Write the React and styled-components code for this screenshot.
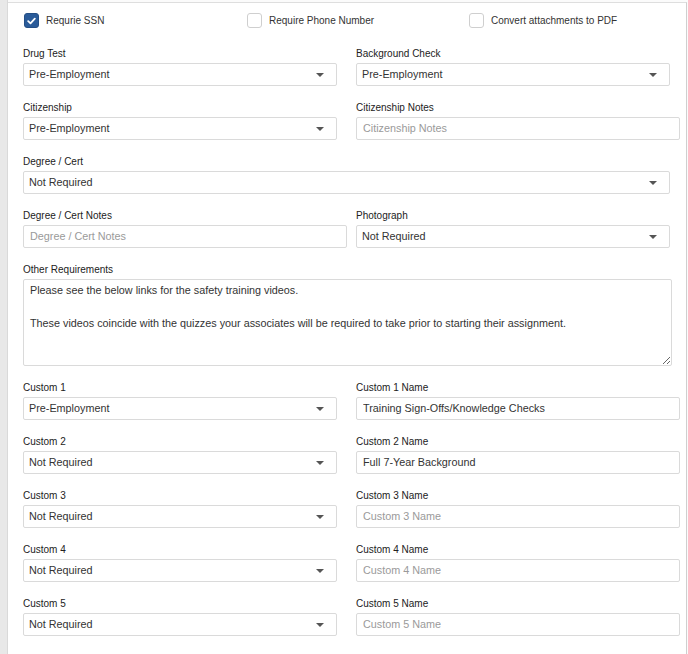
import React from "react";
import styled, { createGlobalStyle } from "styled-components";

const GlobalStyle = createGlobalStyle`
  html, body { margin: 0; padding: 0; background: #ffffff; }
  body { font-family: "Liberation Sans", Arial, sans-serif; color: #333; }
  * { box-sizing: border-box; }
`;

const Frame = styled.div`
  display: flex;
  width: 688px;
  height: 654px;
  overflow: hidden;
  background: #fbfbfb;
  padding-right: 1px;
`;

const SideStrip = styled.div`
  width: 8px;
  flex: none;
  background: #e8e8e8;
  border-right: 1px solid #d9d9d9;
`;

const Panel = styled.div`
  flex: 1;
  margin-top: 2px;
  background: #ffffff;
  border-top: 1px solid #dedede;
  border-right: 1px solid #cfcfcf;
  padding: 10px 6px 0 15px;
`;

const CheckRow = styled.div`
  display: grid;
  grid-template-columns: 223px 222px 1fr;
  padding-left: 1px;
  margin-bottom: 19px;
`;

const CheckItem = styled.label`
  display: flex;
  align-items: center;
  gap: 7px;
  font-size: 10px;
  color: #333;
  height: 15px;
`;

const Box = styled.span`
  width: 15px;
  height: 15px;
  border-radius: 3px;
  display: flex;
  align-items: center;
  justify-content: center;
  background: ${(p) => (p.$checked ? "#2a5b99" : "#ffffff")};
  border: 1px solid ${(p) => (p.$checked ? "#244f86" : "#cfcfcf")};
`;

const Grid = styled.div`
  display: grid;
  grid-template-columns: 324px 324px;
  column-gap: 9px;
  row-gap: 15.5px;
`;

const Field = styled.div`
  display: flex;
  flex-direction: column;
  grid-column: ${(p) => (p.$full ? "1 / -1" : "auto")};
`;

const Label = styled.div`
  font-size: 10px;
  line-height: 13px;
  color: #222;
  margin-bottom: 2.5px;
`;

const SelectBox = styled.div`
  height: 23px;
  width: calc(100% - 10px);
  border: 1px solid #dadada;
  border-radius: 2px;
  background: #fff;
  display: flex;
  align-items: center;
  justify-content: space-between;
  padding: 0 12px 0 5px;
  font-size: 10.8px;
  color: #333;
`;

const Caret = styled.span`
  width: 0;
  height: 0;
  border-left: 4px solid transparent;
  border-right: 4px solid transparent;
  border-top: 4px solid #555;
  margin-top: 2px;
`;

const TextInput = styled.input`
  height: 23px;
  width: 100%;
  border: 1px solid #dadada;
  border-radius: 2px;
  background: #fff;
  padding: 0 6px;
  font-family: "Liberation Sans", Arial, sans-serif;
  font-size: 10.8px;
  color: #333;
  outline: none;
  &::placeholder { color: #9a9a9a; }
`;

const TextArea = styled.textarea`
  height: 87px;
  width: calc(100% - 8px);
  border: 1px solid #dadada;
  border-radius: 2px;
  padding: 2px 6px;
  font-family: "Liberation Sans", Arial, sans-serif;
  font-size: 10.8px;
  line-height: 16.5px;
  color: #333;
  outline: none;
  resize: vertical;
`;

function Check({ checked, children }) {
  return (
    <CheckItem>
      <Box $checked={checked}>
        {checked && (
          <svg width="9" height="8" viewBox="0 0 9 8">
            <path d="M1.2 4.2 L3.5 6.3 L7.8 1.6" fill="none" stroke="#fff" strokeWidth="1.8" strokeLinecap="round" strokeLinejoin="round" />
          </svg>
        )}
      </Box>
      {children}
    </CheckItem>
  );
}

function SelectField({ label, value, full }) {
  return (
    <Field $full={full}>
      <Label>{label}</Label>
      <SelectBox>
        <span>{value}</span>
        <Caret />
      </SelectBox>
    </Field>
  );
}

function InputField({ label, value, placeholder }) {
  return (
    <Field>
      <Label>{label}</Label>
      <TextInput defaultValue={value} placeholder={placeholder} />
    </Field>
  );
}

const customs = [
  { n: 1, sel: "Pre-Employment", val: "Training Sign-Offs/Knowledge Checks" },
  { n: 2, sel: "Not Required", val: "Full 7-Year Background" },
  { n: 3, sel: "Not Required", val: "" },
  { n: 4, sel: "Not Required", val: "" },
  { n: 5, sel: "Not Required", val: "" },
];

export default function App() {
  return (
    <>
      <GlobalStyle />
      <Frame>
        <SideStrip />
        <Panel>
          <CheckRow>
            <Check checked>Requrie SSN</Check>
            <Check>Require Phone Number</Check>
            <Check>Convert attachments to PDF</Check>
          </CheckRow>
          <Grid>
            <SelectField label="Drug Test" value="Pre-Employment" />
            <SelectField label="Background Check" value="Pre-Employment" />
            <SelectField label="Citizenship" value="Pre-Employment" />
            <InputField label="Citizenship Notes" placeholder="Citizenship Notes" />
            <SelectField label="Degree / Cert" value="Not Required" full />
            <InputField label="Degree / Cert Notes" placeholder="Degree / Cert Notes" />
            <SelectField label="Photograph" value="Not Required" />
            <Field $full>
              <Label>Other Requirements</Label>
              <TextArea
                defaultValue={
                  "Please see the below links for the safety training videos.\n\nThese videos coincide with the quizzes your associates will be required to take prior to starting their assignment."
                }
              />
            </Field>
            {customs.map((c) => (
              <React.Fragment key={c.n}>
                <SelectField label={`Custom ${c.n}`} value={c.sel} />
                <InputField
                  label={`Custom ${c.n} Name`}
                  value={c.val || undefined}
                  placeholder={`Custom ${c.n} Name`}
                />
              </React.Fragment>
            ))}
          </Grid>
        </Panel>
      </Frame>
    </>
  );
}
